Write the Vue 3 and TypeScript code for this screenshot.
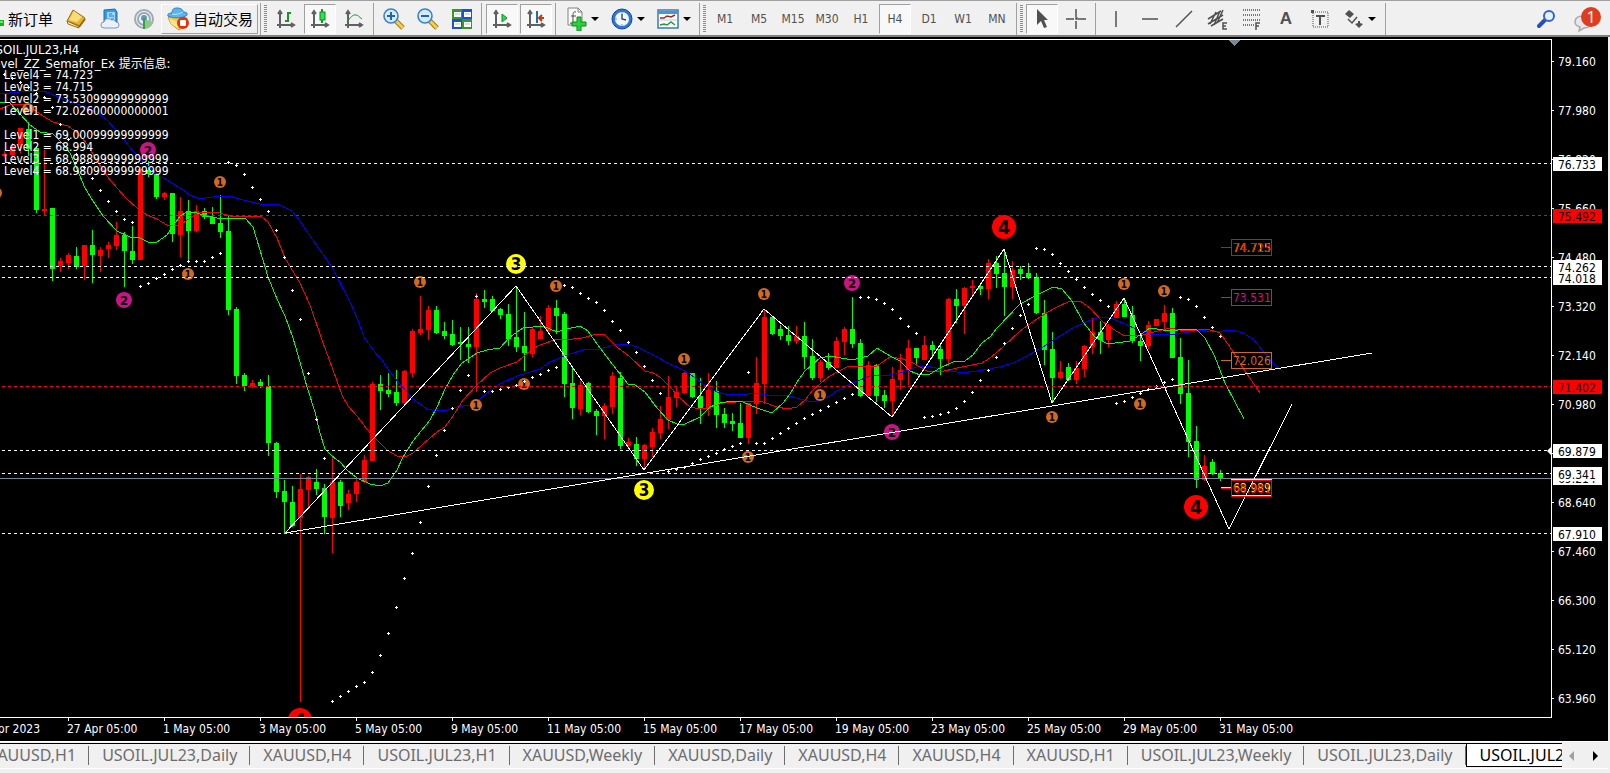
<script setup lang="ts">
import { ref } from 'vue'

type Candle = [up: 0 | 1, open: number, close: number, high: number, low: number]
type Point = [number, number]

const STEP = 8
const FIRST = 4
const TOP = 40

const timeframes = ['M1', 'M5', 'M15', 'M30', 'H1', 'H4', 'D1', 'W1', 'MN']
const timeframe = ref('H4')

const tabs = [
  'XAUUSD,H1', 'USOIL.JUL23,Daily', 'XAUUSD,H4', 'USOIL.JUL23,H1', 'XAUUSD,Weekly',
  'XAUUSD,Daily', 'XAUUSD,H4', 'XAUUSD,H4', 'XAUUSD,H1', 'USOIL.JUL23,Weekly',
  'USOIL.JUL23,Daily', 'USOIL.JUL23,H4',
]
const activeTab = ref(11)

const upperLevels = ['Level4 = 74.723', 'Level3 = 74.715', 'Level2 = 73.53099999999999', 'Level1 = 72.02600000000001']
const lowerLevels = ['Level1 = 69.00099999999999', 'Level2 = 68.994', 'Level3 = 68.98899999999999', 'Level4 = 68.98099999999999']

// up flag, body top, body bottom, wick top, wick bottom
const candles: Candle[] = [
  [1, 154, 156, 151, 157], [1, 147, 155, 143, 160], [1, 128, 145, 128, 153], [0, 129, 149, 122, 156],
  [0, 148, 210, 146, 213], [1, 209, 211, 150, 215], [0, 208, 269, 208, 281], [1, 261, 266, 258, 272],
  [1, 255, 263, 253, 269], [0, 256, 267, 247, 269], [1, 245, 266, 245, 280], [0, 245, 255, 230, 283],
  [1, 250, 256, 247, 272], [1, 245, 249, 242, 258], [1, 235, 246, 222, 250], [0, 235, 251, 232, 287],
  [0, 251, 260, 226, 264], [1, 169, 260, 167, 260], [0, 170, 174, 161, 177], [0, 174, 197, 174, 199],
  [1, 193, 197, 192, 200], [0, 193, 234, 193, 242], [1, 211, 235, 197, 257], [0, 211, 231, 200, 262],
  [1, 211, 231, 205, 232], [0, 211, 217, 208, 219], [0, 217, 224, 207, 224], [0, 223, 232, 195, 238],
  [0, 231, 310, 215, 315], [0, 309, 376, 307, 384], [0, 375, 386, 373, 391], [1, 383, 386, 380, 388],
  [0, 382, 386, 379, 388], [0, 386, 443, 375, 456], [0, 443, 492, 442, 498], [0, 491, 502, 480, 533],
  [0, 502, 526, 486, 527], [1, 489, 518, 474, 702], [1, 477, 490, 476, 508], [0, 482, 489, 469, 495],
  [0, 488, 517, 484, 534], [1, 482, 518, 455, 553], [0, 482, 506, 480, 517], [1, 494, 503, 490, 510],
  [1, 482, 494, 479, 502], [1, 460, 482, 455, 483], [1, 384, 461, 382, 461], [0, 384, 391, 375, 410],
  [0, 390, 394, 373, 397], [0, 392, 403, 370, 406], [1, 371, 403, 370, 403], [1, 331, 373, 329, 377],
  [1, 329, 333, 296, 335], [1, 310, 330, 306, 340], [0, 310, 333, 306, 334], [0, 331, 336, 322, 339],
  [0, 334, 345, 320, 346], [0, 342, 344, 327, 360], [0, 344, 347, 327, 363], [1, 299, 347, 293, 392],
  [0, 299, 302, 290, 308], [0, 299, 311, 296, 311], [0, 309, 315, 308, 319], [0, 314, 339, 304, 346],
  [0, 337, 347, 286, 352], [0, 346, 353, 312, 371], [1, 329, 354, 328, 357], [1, 331, 339, 316, 339],
  [1, 308, 331, 305, 332], [0, 308, 316, 300, 334], [0, 314, 384, 312, 397], [0, 383, 408, 367, 419],
  [1, 385, 409, 381, 415], [0, 383, 412, 382, 413], [0, 411, 416, 409, 435], [1, 406, 416, 403, 439],
  [1, 376, 407, 372, 414], [0, 378, 446, 372, 449], [1, 442, 446, 438, 447], [0, 444, 459, 437, 466],
  [1, 445, 459, 444, 470], [1, 432, 447, 428, 457], [1, 419, 433, 406, 439], [1, 397, 420, 376, 429],
  [1, 392, 398, 387, 407], [1, 373, 393, 372, 394], [0, 373, 397, 373, 398], [0, 396, 409, 378, 424],
  [1, 390, 409, 373, 416], [0, 391, 415, 381, 428], [0, 414, 423, 408, 428], [0, 421, 424, 413, 431],
  [0, 423, 438, 403, 438], [1, 403, 438, 403, 444], [1, 383, 404, 357, 414], [1, 317, 384, 309, 404],
  [0, 317, 334, 317, 335], [0, 329, 336, 325, 340], [0, 335, 341, 326, 345], [1, 336, 341, 326, 344],
  [0, 336, 357, 322, 369], [0, 356, 378, 339, 380], [1, 362, 378, 360, 382], [0, 362, 368, 353, 370],
  [1, 341, 368, 337, 368], [1, 329, 342, 327, 355], [0, 329, 344, 297, 348], [0, 343, 396, 339, 397],
  [1, 365, 396, 361, 396], [0, 365, 396, 364, 402], [0, 395, 401, 390, 408], [1, 379, 401, 367, 417],
  [1, 370, 380, 354, 390], [1, 348, 370, 340, 385], [0, 348, 358, 348, 365], [1, 345, 360, 336, 360],
  [0, 345, 350, 341, 358], [0, 349, 359, 343, 375], [1, 299, 359, 298, 365], [0, 299, 306, 289, 323],
  [1, 288, 306, 287, 334], [1, 286, 288, 280, 295], [0, 286, 289, 283, 295], [1, 263, 289, 259, 299],
  [0, 263, 274, 256, 288], [0, 273, 287, 249, 316], [1, 270, 287, 261, 299], [0, 269, 274, 266, 280],
  [0, 273, 278, 263, 279], [0, 277, 313, 273, 314], [0, 313, 350, 300, 365], [0, 349, 378, 332, 403],
  [1, 372, 378, 361, 379], [0, 367, 380, 363, 381], [1, 368, 380, 361, 384], [1, 346, 369, 345, 377],
  [1, 332, 347, 318, 354], [0, 332, 340, 321, 354], [1, 326, 340, 324, 347], [1, 304, 318, 301, 318],
  [0, 304, 317, 299, 317], [0, 315, 341, 306, 343], [0, 341, 346, 333, 361], [1, 325, 346, 321, 349],
  [1, 319, 326, 319, 326], [1, 313, 322, 305, 331], [0, 313, 358, 308, 358], [0, 357, 394, 338, 404],
  [0, 393, 442, 360, 457], [0, 441, 480, 426, 488], [1, 466, 480, 455, 481], [0, 462, 474, 459, 475],
  [0, 473, 479, 470, 481],
]

// parabolic SAR, one dot per bar
const sar = [
  74, 78, 82, 87, 93, 97, 107, 124, 139, 154, 167, 178, 190, 201, 211, 219, 222, 286, 283, 278, 274, 269, 265,
  261, 261, 261, 257, 253, 162, 165, 174, 187, 199, 211, 230, 257, 290, 319, 373, 419, 458, 701, 696, 691, 686,
  682, 672, 655, 633, 607, 578, 553, 522, 486, 455, 430, 408, 390, 375, 296, 391, 391, 389, 387, 385, 381, 377,
  374, 370, 367, 285, 287, 293, 298, 302, 310, 321, 330, 342, 352, 366, 380, 393, 471, 469, 467, 463, 459, 456,
  453, 449, 446, 443, 372, 443, 443, 438, 433, 428, 423, 418, 414, 410, 406, 402, 398, 394, 297, 297, 299, 303,
  309, 318, 326, 333, 417, 416, 414, 412, 408, 401, 392, 380, 370, 357, 343, 328, 315, 304, 248, 249, 254, 263,
  271, 279, 287, 294, 300, 306, 403, 401, 397, 393, 389, 386, 382, 379, 297, 299, 306, 317, 327, 336,
]

const jaw =
  '0,94 20,92 43,91 50,93 63,99 80,105 97,112 107,120 117,131 133,151 143,161 153,171 167,180 183,190 190,195 200,199 213,197 220,196 230,196 243,200 260,204 280,205 292,211 300,221 317,246 325,257 333,269 350,302 358,320 364,337 373,350 382,360 390,372 400,384 413,399 427,409 437,411 447,410 457,407 470,405 480,399 487,393 500,384 517,376 527,373 540,369 550,362 567,355 583,350 600,349 617,344 627,344 637,347 653,355 670,364 683,370 690,374 707,387 717,392 725,394 740,395 757,393 767,395 780,395 790,396 800,399 812,402 820,400 830,396 837,391 850,384 870,376 890,375 903,372 917,367 927,366 940,369 957,372 970,372 990,369 1003,366 1013,363 1023,358 1040,349 1057,338 1073,328 1093,319 1103,317 1113,319 1123,323 1140,331 1150,334 1170,335 1190,332 1200,330 1213,332 1233,330 1243,333 1253,339 1263,351 1273,363 1284,373'
const teeth =
  '0,109 10,105 23,104 33,109 43,116 53,122 68,126 78,133 87,144 97,161 107,176 117,188 127,199 137,208 147,215 157,219 167,225 175,226 183,223 193,216 200,213 210,212 220,213 230,216 261,216 268,222 277,238 285,258 300,283 310,305 322,340 333,370 342,395 348,406 357,416 367,429 377,440 387,450 397,456 405,457 413,453 422,445 437,432 445,427 453,416 463,400 477,385 490,373 500,368 517,362 530,351 540,345 557,339 573,339 582,338 597,334 605,335 617,347 630,357 645,371 653,373 660,377 670,387 680,398 690,407 700,409 707,408 723,403 750,401 763,402 777,407 788,409 797,407 805,400 813,390 827,378 837,372 847,367 877,366 890,357 903,359 913,363 927,371 940,372 957,368 982,363 990,358 1003,347 1020,331 1037,319 1053,309 1070,301 1080,301 1090,308 1103,322 1113,329 1123,335 1140,336 1150,333 1170,328 1180,330 1190,331 1207,329 1220,333 1230,347 1243,368 1260,393'
const lips =
  '0,102 10,103 20,114 30,125 40,132 53,134 62,143 70,153 77,169 85,188 93,201 103,216 117,231 130,237 140,238 150,243 157,242 167,235 180,216 187,212 197,213 207,216 217,218 227,218 245,218 253,227 260,250 268,277 277,299 285,316 293,338 300,362 307,387 315,412 320,433 325,449 332,456 340,462 347,470 357,478 370,484 380,486 388,483 397,470 403,457 413,441 430,420 437,407 445,389 453,375 462,363 477,353 487,350 500,348 510,337 523,328 543,326 557,332 567,329 580,326 588,331 600,348 613,365 628,384 635,385 645,392 657,408 668,420 677,424 685,424 700,417 710,407 720,403 733,401 743,402 757,408 772,413 783,403 790,394 797,382 805,371 820,358 830,356 852,360 868,356 877,348 890,356 900,361 910,371 920,375 930,374 940,368 953,362 965,361 973,355 982,343 990,337 997,328 1020,304 1037,295 1053,287 1062,289 1072,301 1083,322 1095,337 1108,344 1130,341 1140,335 1150,328 1170,331 1187,329 1197,330 1205,338 1215,357 1225,383 1244,419'
const zigzag = '285,533 516,286 644,470 764,309 892,417 1004,249 1052,403 1124,298 1229,529 1292,404'
const trend = '285,533 1372,353'

const lines = [
  { y: 163, tone: 'white' }, { y: 215, tone: 'red' }, { y: 266, tone: 'white' }, { y: 277, tone: 'white' },
  { y: 386, tone: 'red' }, { y: 450, tone: 'white' }, { y: 473, tone: 'white' }, { y: 533, tone: 'white' },
]

const markers: { level: number; radius: number; size: number; points: Point[] }[] = [
  {
    level: 1, radius: 6, size: 10,
    points: [[-4, 193], [28, 109], [188, 274], [220, 182], [420, 282], [476, 405], [524, 384], [556, 286], [684, 359],
      [748, 457], [764, 294], [820, 395], [1052, 417], [1124, 284], [1140, 404], [1164, 291]],
  },
  { level: 2, radius: 8, size: 13, points: [[148, 150], [124, 300], [852, 283], [892, 432]] },
  { level: 3, radius: 10, size: 17, points: [[516, 264], [644, 490]] },
  { level: 4, radius: 12, size: 20, points: [[1004, 227], [1196, 507], [300, 720]] },
]

const priceBoxes = [
  { y: 247, text: '74.715', color: '#ffff00' },
  { y: 247, text: '74.723', color: '#ff0000' },
  { y: 297, text: '73.531', color: '#c71585' },
  { y: 360, text: '72.026', color: '#d2691e' },
  { y: 487, text: '68.989', color: '#ffff00' },
  { y: 488, text: '68.981', color: '#ff0000' },
]

const scale = ['79.160', '77.980', '76.820', '75.660', '74.480', '73.320', '72.140', '70.980', '69.820', '68.640',
  '67.460', '66.300', '65.120', '63.960'].map((text, i) => ({ text, y: 61 + i * 49 }))

const tags = [
  { y: 164, text: '76.733', tone: 'light' }, { y: 216, text: '75.492', tone: 'alert' },
  { y: 278, text: '74.018', tone: 'light' }, { y: 267, text: '74.262', tone: 'light' },
  { y: 387, text: '71.402', tone: 'alert' }, { y: 451, text: '69.879', tone: 'light' },
  { y: 478, text: '69.214', tone: 'light' }, { y: 474, text: '69.341', tone: 'light' },
  { y: 534, text: '67.910', tone: 'light' },
]

const dates = ['27 Apr', '1 May', '3 May', '5 May', '9 May', '11 May', '15 May', '17 May', '19 May', '23 May',
  '25 May', '29 May', '31 May'].map((day, i) => ({ text: `${day} 05:00`, x: 68 + i * 96 }))
</script>

<template>
  <div class="terminal">
    <header class="toolbar">
      <button class="tool order">
        <svg class="order-mark" width="5" height="20"><path d="M0 11h4v6H0z" fill="#14b414" /><path d="M0 12h3v2H0z" fill="#6be86b" /></svg>
        新订单
      </button>
      <button class="tool" aria-label="Market watch">
        <svg width="22" height="22" viewBox="0 0 22 22">
          <path d="M8 2l12 8-5 8L2 13z" fill="#e6b432" stroke="#9a6a10" />
          <path d="M9 3l8 6-5 5-8-2z" fill="#f8dc78" />
          <path d="M2 13l11 5 1 2L3 16z" fill="#fff4c0" stroke="#9a6a10" />
          <path d="M14 19l6-8" stroke="#9a6a10" stroke-width="2" />
        </svg>
      </button>
      <button class="tool" aria-label="Data centre">
        <svg width="22" height="22" viewBox="0 0 22 22">
          <path d="M5 2l11-1 2 3v10H5z" fill="#2d9be8" stroke="#1c6fb4" />
          <path d="M8 4h8v10H8z" fill="#9cd6fa" /><path d="M10 6h3M10 8h5M12 11h3" stroke="#2878c8" stroke-width="1" />
          <path d="M5 20a3 3 0 0 1 0-6 4 4 0 0 1 7-2 4 4 0 0 1 5 2 3 3 0 0 1 0 6z" fill="#eaf0fa" stroke="#8296be" />
        </svg>
      </button>
      <button class="tool" aria-label="Signals">
        <svg width="22" height="22" viewBox="0 0 22 22" fill="none">
          <circle cx="11" cy="11" r="9" stroke="#a0aab4" stroke-width="2" />
          <circle cx="11" cy="11" r="6" stroke="#96aabe" stroke-width="2" />
          <path d="M11 11l9 3a10 10 0 0 1-8 7z" fill="#8cc88c" />
          <circle cx="11" cy="10" r="3" fill="#6496c8" /><path d="M11 10v11" stroke="#3ca03c" stroke-width="2" />
        </svg>
      </button>
      <button class="tool auto">
        <svg width="24" height="24" viewBox="0 0 24 24">
          <path d="M2 10l9-1 10 2-2 8-6 4-8-6z" fill="#f5c83c" stroke="#c8961e" />
          <path d="M3 11l9 4 1 7-8-5z" fill="#fbe48c" />
          <path d="M6 6c0-4 2-5 5-5s6 1 6 4c3 0 5 1 4 3-3 3-13 4-19 1-1-2 1-3 4-3z" fill="#5ab4ee" stroke="#2d82c8" />
          <path d="M6 7c4 1 7 0 11-2" stroke="#bfe4fa" fill="none" />
          <circle cx="17" cy="16" r="6" fill="#e6320a" /><rect x="14" y="13" width="6" height="6" rx="1" fill="#fff" />
        </svg>
        自动交易
      </button>
      <i class="rule"></i><i class="grip"></i>

      <button class="tool" aria-label="Bar chart">
        <svg class="axes" width="20" height="20" viewBox="0 0 20 20">
          <path d="M4 19V3M2 5l2-3 2 3M1 16h16M15 14l3 2-3 2" /><path class="green" d="M12 3v10M12 4h3M12 12H9" />
        </svg>
      </button>
      <button class="tool pressed" aria-label="Candlesticks" aria-pressed="true">
        <svg class="axes" width="20" height="20" viewBox="0 0 20 20">
          <path d="M4 19V3M2 5l2-3 2 3M1 16h16M15 14l3 2-3 2" /><path class="green" d="M12 0v14" />
          <rect x="10" y="3" width="5" height="8" fill="#28e650" stroke="#0a8c1e" stroke-width="1" />
        </svg>
      </button>
      <button class="tool" aria-label="Line chart">
        <svg class="axes" width="20" height="20" viewBox="0 0 20 20">
          <path d="M4 19V3M2 5l2-3 2 3M1 16h16M15 14l3 2-3 2" /><path class="green thin" d="M3 13c3-4 6-8 9-7 2 0 3 2 6 4" />
        </svg>
      </button>
      <i class="rule"></i>
      <button class="tool" aria-label="Zoom in">
        <svg width="22" height="22" viewBox="0 0 22 22">
          <path d="M13 13l7 7" stroke="#a07814" stroke-width="5" /><path d="M13 13l7 7" stroke="#f0d050" stroke-width="3" />
          <circle cx="8" cy="8" r="7" fill="#d2ecfc" stroke="#3c82c8" stroke-width="1.6" /><path d="M4 8h8M8 4v8" stroke="#2864a0" stroke-width="2" />
        </svg>
      </button>
      <button class="tool" aria-label="Zoom out">
        <svg width="22" height="22" viewBox="0 0 22 22">
          <path d="M13 13l7 7" stroke="#a07814" stroke-width="5" /><path d="M13 13l7 7" stroke="#f0d050" stroke-width="3" />
          <circle cx="8" cy="8" r="7" fill="#d2ecfc" stroke="#3c82c8" stroke-width="1.6" /><path d="M4 8h8" stroke="#2864a0" stroke-width="2" />
        </svg>
      </button>
      <button class="tool" aria-label="Tile windows">
        <svg width="22" height="22" viewBox="0 0 22 22">
          <path d="M1 1h10v10H1zM11 11h10v10H11z" fill="#3c9628" /><path d="M11 1h10v10H11zM1 11h10v10H1z" fill="#2050d2" />
          <path d="M3 4h7v5H3zM13 4h7v5h-7zM3 14h7v5H3zM13 14h7v5h-7z" fill="#fff" />
          <path d="M4 6h5M4 16h5M14 6h5M14 16h5" stroke="#a0c8dc" />
        </svg>
      </button>
      <i class="rule"></i>
      <button class="tool pressed" aria-label="Auto scroll" aria-pressed="true">
        <svg class="axes" width="20" height="20" viewBox="0 0 20 20">
          <path d="M4 19V3M2 5l2-3 2 3M1 16h16M15 14l3 2-3 2" /><path d="M10 5l5 4-5 4z" fill="#28dc50" stroke="#0a961e" stroke-width="1" />
        </svg>
      </button>
      <button class="tool pressed" aria-label="Chart shift" aria-pressed="true">
        <svg class="axes" width="20" height="20" viewBox="0 0 20 20">
          <path d="M4 19V3M2 5l2-3 2 3M1 16h16M15 14l3 2-3 2" /><path class="blue" d="M11 2v12" />
          <path class="rust" d="M18 9h-5M16 6l-3 3 3 3" />
        </svg>
      </button>
      <i class="rule"></i>
      <button class="tool menu" aria-label="Indicators">
        <svg width="22" height="24" viewBox="0 0 22 24">
          <path d="M3 1h10l4 4v13H3z" fill="#fafafa" stroke="#82827d" /><path d="M13 1v4h4" fill="none" stroke="#82827d" />
          <path d="M11 5c-3-1-3 2-3 4v6c0 1-1 2-3 1M6 9h5" stroke="#505046" fill="none" />
          <path d="M12 10h4v5h5v4h-5v5h-4v-5H7v-4h5z" fill="#28d23c" stroke="#0a8c1e" />
        </svg>
        <i class="caret"></i>
      </button>
      <button class="tool menu" aria-label="Periods">
        <svg width="22" height="22" viewBox="0 0 22 22">
          <circle cx="11" cy="11" r="10" fill="#2d78d2" stroke="#144696" /><circle cx="11" cy="11" r="7" fill="#f0f6fc" />
          <path d="M11 6v5l4 1" stroke="#3c4650" stroke-width="1.4" fill="none" /><path d="M11 4v2M11 16v2M4 11h2" stroke="#8296aa" />
        </svg>
        <i class="caret"></i>
      </button>
      <button class="tool menu" aria-label="Templates">
        <svg width="22" height="20" viewBox="0 0 22 20">
          <rect x="1" y="1" width="20" height="18" fill="#fff" stroke="#3c78b4" stroke-width="1.5" /><path d="M1 2h20v3H1z" fill="#4696dc" />
          <path d="M3 9h4l3-2 4 1 4-2" stroke="#a02814" fill="none" stroke-width="1.5" /><path d="M2 11h18" stroke="#b4c8dc" />
          <path d="M3 16l4-1 3 1 4-3 4 3" stroke="#28963c" fill="none" stroke-width="1.5" />
        </svg>
        <i class="caret"></i>
      </button>
      <i class="rule"></i><i class="grip"></i>

      <button
        v-for="tf in timeframes" :key="tf" class="tool period" :class="{ pressed: tf === timeframe }"
        :aria-pressed="tf === timeframe" @click="timeframe = tf"
      >{{ tf }}</button>
      <i class="rule"></i><i class="grip"></i>

      <button class="tool pressed" aria-label="Cursor" aria-pressed="true">
        <svg width="20" height="22" viewBox="0 0 20 22"><path d="M5 1v16l4-4 3 7 3-1-3-7h4z" fill="#505050" /></svg>
      </button>
      <button class="tool ink" aria-label="Crosshair">
        <svg width="20" height="20" viewBox="0 0 20 20"><path d="M0 10h8M12 10h8M10 0v8M10 12v8" /><path d="M10 9h1v1h-1z" /></svg>
      </button>
      <i class="rule"></i>
      <button class="tool ink" aria-label="Vertical line"><svg width="20" height="20"><path d="M10 2v16" /></svg></button>
      <button class="tool ink" aria-label="Horizontal line"><svg width="20" height="20"><path d="M2 10h16" /></svg></button>
      <button class="tool ink" aria-label="Trendline"><svg width="20" height="20"><path d="M2 18L18 2" /></svg></button>
      <button class="tool ink" aria-label="Equidistant channel">
        <svg width="22" height="22" viewBox="0 0 22 22">
          <path d="M1 11L14 3M1 16L16 7M4 18l12-7M3 16L9 4M7 17L13 3M10 15l6-13" /><path d="M20 15h-4v6h4M16 18h3" />
        </svg>
      </button>
      <button class="tool ink" aria-label="Fibonacci retracement">
        <svg width="22" height="22" viewBox="0 0 22 22">
          <path stroke-dasharray="1 1" d="M2 2h18M2 7h18M2 12h18M2 17h11" /><path d="M15 22v-7h4M15 18h3" />
        </svg>
      </button>
      <button class="tool glyph" aria-label="Text">A</button>
      <button class="tool ink" aria-label="Text label">
        <svg width="20" height="20" viewBox="0 0 20 20">
          <path stroke-width="1" stroke-dasharray="1 1" d="M3 3h15v15H3z" /><path d="M1 1h3v3H1z" fill="#505050" stroke="none" />
          <path stroke-width="2" d="M6 7h9M10 7v9" />
        </svg>
      </button>
      <button class="tool menu ink" aria-label="Arrows">
        <svg width="20" height="20" viewBox="0 0 20 20">
          <path d="M5 1l5 4-4 4-5-4zM15 19l-4-4 3-1v-2h2v2l3 1z" fill="#505050" stroke="none" /><path d="M4 10l4 4 5-6" />
        </svg>
        <i class="caret"></i>
      </button>
      <i class="rule"></i>
      <span class="space"></span>
      <button class="tool" aria-label="Search">
        <svg width="20" height="20" viewBox="0 0 20 20">
          <path d="M8 11l-6 6" stroke="#2850b4" stroke-width="4" stroke-linecap="round" /><circle cx="12" cy="7" r="5" fill="#e6f0fc" stroke="#3264c8" stroke-width="2" />
        </svg>
      </button>
      <button class="tool chat" aria-label="Notifications">
        <svg width="32" height="28" viewBox="0 0 32 28">
          <path d="M12 11c5 0 9 2 9 6s-4 6-8 6l-5 3 1-4c-4-1-5-3-5-5 0-4 3-6 8-6z" fill="#e6e6eb" stroke="#aaaaaf" stroke-width="1.5" />
          <circle cx="20" cy="12" r="10" fill="#e03c1e" /><text x="20" y="18" text-anchor="middle" fill="#fff">1</text>
        </svg>
      </button>
    </header>

    <main class="chart">
      <section class="plot">
        <svg class="canvas" width="100%" height="100%">
          <g :transform="`translate(0 ${-TOP})`">
            <g class="crisp">
              <template v-for="(c, k) in candles" :key="k">
                <rect :class="c[0] ? 'up' : 'down'" :x="FIRST + k * STEP" :y="c[3]" width="1" :height="c[4] - c[3]" />
                <rect :class="c[0] ? 'up' : 'down'" :x="FIRST + k * STEP - 2" :y="c[1]" width="5" :height="c[2] - c[1]" />
              </template>
              <polyline class="curve" stroke="#0000ff" :points="jaw" />
              <polyline class="curve" stroke="#ff0000" :points="teeth" />
              <polyline class="curve" stroke="#00ff00" :points="lips" />
            </g>
            <g v-for="m in markers" :key="m.level" :class="`level${m.level}`">
              <template v-for="p in m.points" :key="p.join()">
                <circle :cx="p[0]" :cy="p[1]" :r="m.radius" />
                <text class="digit" :x="p[0]" :y="p[1]" :font-size="m.size" dy="0.36em">{{ m.level }}</text>
              </template>
            </g>
            <g class="crisp">
              <path
                v-for="(y, k) in sar" :key="k" class="dot"
                :d="`M${FIRST + k * STEP - 1} ${y}h3v1h-3zM${FIRST + k * STEP} ${y - 1}h1v3h-1z`"
              />
              <line v-for="l in lines" :key="l.y" class="dashed" :stroke="l.tone" x1="2" x2="100%" :y1="l.y + 0.5" :y2="l.y + 0.5" />
              <rect class="bid" x="0" y="478" width="100%" height="1" />
              <polyline class="curve" stroke="#fff" :points="zigzag" />
              <polyline class="curve" stroke="#fff" :points="trend" />
              <path d="M1228 40h12l-6 6z" fill="#778899" />
            </g>
            <g v-for="b in priceBoxes" :key="b.text" :stroke="b.color">
              <path class="crisp curve" :d="`M1221 ${b.y + 0.5}h10M1231.5 ${b.y - 7.5}h40v16h-40z`" />
              <text class="label" x="1233" :y="b.y + 5" :fill="b.color" stroke="none">{{ b.text }}</text>
            </g>
          </g>
        </svg>
        <i class="shift"></i>
        <div class="notes">
          <p class="title">USOIL.JUL23,H4</p>
          <p class="title">Level_ZZ_Semafor_Ex <span>提示信息:</span></p>
          <div class="levels"><p v-for="t in upperLevels" :key="t">{{ t }}</p></div>
          <div class="levels"><p v-for="t in lowerLevels" :key="t">{{ t }}</p></div>
        </div>
      </section>
      <svg class="prices" width="100%" height="100%">
        <g transform="translate(0 -39)">
          <g v-for="s in scale" :key="s.text">
            <rect x="0" :y="s.y" width="2" height="1" fill="#fff" />
            <text class="label" x="6" :y="s.y + 5">{{ s.text }}</text>
          </g>
          <g v-for="t in tags" :key="t.text" :class="t.tone">
            <rect x="1" :y="t.y - 7" width="49" height="14" />
            <text class="label" x="6" :y="t.y + 5">{{ t.text }}</text>
          </g>
        </g>
      </svg>
      <svg class="times" width="100%" height="23">
        <text class="label" x="40" y="15" text-anchor="end">25 Apr 2023</text>
        <g v-for="d in dates" :key="d.x">
          <rect :x="d.x" y="0" width="1" height="3" fill="#fff" /><text class="label" :x="d.x - 1" y="15">{{ d.text }}</text>
        </g>
      </svg>
    </main>

    <nav class="tabbar">
      <div class="tabs" role="tablist">
        <button
          v-for="(t, i) in tabs" :key="i" role="tab" :aria-selected="i === activeTab" :class="{ active: i === activeTab }"
          @click="activeTab = i"
        ><span>{{ t }}</span></button>
      </div>
      <div class="scroll">
        <button class="left" aria-label="Scroll tabs left"></button>
        <button class="right" aria-label="Scroll tabs right"></button>
      </div>
    </nav>
  </div>
</template>

<style>
body {
  background: #f0f0f0;
}
</style>

<style scoped>
.terminal {
  --ui: 'DejaVu Sans Condensed', 'DejaVu Sans', 'Noto Sans CJK SC', sans-serif;
  display: flex;
  flex-direction: column;
  min-height: 100vh;
  background: #f0f0f0;
  font-family: var(--ui);
  overflow: hidden;
}
button {
  margin: 0;
  padding: 0;
  border: 0;
  background: none;
  font: inherit;
  color: inherit;
}

.toolbar {
  display: flex;
  align-items: center;
  box-sizing: border-box;
  height: 37px;
  padding-top: 1px;
  border-top: 1px solid #a0a0a0;
  border-bottom: 2px solid #808080;
  background: #f0f0f0;
}
.tool {
  display: flex;
  flex: none;
  align-items: center;
  justify-content: center;
  box-sizing: border-box;
  width: 34px;
  height: 30px;
}
.order,
.auto {
  font-family: 'Noto Sans CJK SC', sans-serif;
  font-size: 15px;
  line-height: 20px;
  white-space: nowrap;
  color: #000;
}
.order {
  justify-content: flex-start;
  width: 59px;
  gap: 3px;
}
.auto {
  width: 97px;
  gap: 3px;
  border: 1px solid #fff;
  border-right-color: #a0a0a0;
  border-bottom-color: #a0a0a0;
}
.menu {
  width: 46px;
  gap: 4px;
}
.pressed {
  width: 32px;
  margin: 0 1px;
  border: 1px solid #fff;
  border-top-color: #a0a0a0;
  border-left-color: #a0a0a0;
  background: #f8f8f8;
}
.period {
  font-size: 12px;
  color: #505050;
}
.glyph {
  font-family: 'Liberation Sans', sans-serif;
  font-size: 17px;
  font-weight: 700;
  color: #505050;
}
.rule {
  flex: none;
  width: 1px;
  height: 32px;
  margin: 0 3px 0 2px;
  background: #a0a0a0;
}
.grip {
  flex: none;
  width: 3px;
  height: 28px;
  margin-right: 2px;
  background: repeating-linear-gradient(#8c8c8c 0 1px, #f0f0f0 1px 2px);
}
.caret {
  border: 4px solid transparent;
  border-top-color: #000;
  border-bottom: 0;
}
.axes path {
  fill: none;
  stroke: #606060;
  stroke-width: 2;
}
.axes path.green {
  stroke: #149628;
}
.axes path.thin {
  stroke-width: 1;
}
.axes path[fill] {
  fill: #28dc50;
  stroke: #0a961e;
  stroke-width: 1;
}
.axes path.blue {
  stroke: #1e6eb4;
}
.axes path.rust {
  stroke: #be3c0a;
}
.ink svg {
  fill: none;
  stroke: #505050;
  stroke-width: 1.5;
}
.space {
  flex: 1;
}
.chat {
  width: 46px;
}
.chat text {
  font-family: 'Open Sans', sans-serif;
  font-size: 17px;
}

.chart {
  display: grid;
  flex: 1;
  grid-template-columns: minmax(0, 1fr) 56px;
  grid-template-rows: minmax(679px, 1fr) 23px;
  margin-right: 2px;
  padding-top: 2px;
  background: #000;
}
.plot {
  position: relative;
  overflow: hidden;
  border: 1px solid #fff;
  border-left: 0;
}
.canvas,
.prices,
.times {
  display: block;
}
.canvas {
  position: absolute;
  inset: 0;
}
.crisp {
  shape-rendering: crispEdges;
}
.up {
  fill: #ff0000;
}
.down {
  fill: #00ff00;
}
.curve {
  fill: none;
}
.dot {
  fill: #fff;
}
.dashed {
  stroke-dasharray: 3 3;
}
.bid {
  fill: #778899;
}
.level1 {
  fill: #d2691e;
}
.level2 {
  fill: #c71585;
}
.level3 {
  fill: #ffff00;
}
.level4 {
  fill: #ff0000;
}
.digit {
  fill: #000;
  font-family: 'DejaVu Sans Condensed', 'DejaVu Sans', sans-serif;
  font-weight: 700;
  text-anchor: middle;
}
.label {
  font-family: var(--ui);
  font-size: 12px;
}
.prices text,
.times text {
  fill: #fff;
}
.light rect {
  fill: #fff;
}
.alert rect {
  fill: #ff0000;
}
.light text,
.alert text {
  fill: #000;
}
.shift {
  position: absolute;
  top: 407px;
  right: 0;
  border: 4px solid transparent;
  border-right-color: #fff;
  border-left: 0;
}
.notes {
  position: absolute;
  top: 3px;
  left: 4px;
  color: #fff;
  font-size: 12px;
  line-height: 12px;
  white-space: nowrap;
}
.notes p {
  margin: 0;
}
.notes .title {
  height: 13px;
  margin-left: -17px;
  font-size: 13px;
  line-height: 13px;
}
.title span {
  font-family: 'Noto Sans CJK SC', sans-serif;
  font-size: 12px;
}
.levels + .levels {
  margin-top: 12px;
}

.tabbar {
  display: flex;
  height: 25px;
  margin: 0 2px 4px 0;
  padding-top: 1px;
  border-top: 1px solid #fff;
  border-bottom: 1px solid #fff;
  color: #6d6d6d;
}
.tabs {
  display: flex;
  flex: 1;
  min-width: 0;
  overflow: hidden;
  border-top: 1px solid #000;
}
.tabs button {
  display: flex;
  flex: none;
  align-items: center;
  height: 23px;
  box-sizing: border-box;
  font-family: 'Noto Sans', sans-serif;
  font-size: 16px;
}
.tabs button:first-child {
  margin-left: -25px;
}
.tabs span {
  padding: 0 12px 0 13px;
  border-right: 1px solid #6d6d6d;
  line-height: 19px;
}
.tabs .active {
  border-left: 1px solid #000;
  border-bottom: 1px solid #000;
  background: #fff;
  color: #000;
}
.scroll {
  display: flex;
  flex: none;
  align-items: center;
  justify-content: space-between;
  width: 46px;
  box-sizing: border-box;
  padding: 0 10px 0 7px;
}
.scroll button {
  border: 5px solid transparent;
}
.scroll .left {
  border-left: 0;
  border-right-color: #a0a0a0;
}
.scroll .right {
  border-right: 0;
  border-left-color: #000;
}
</style>
